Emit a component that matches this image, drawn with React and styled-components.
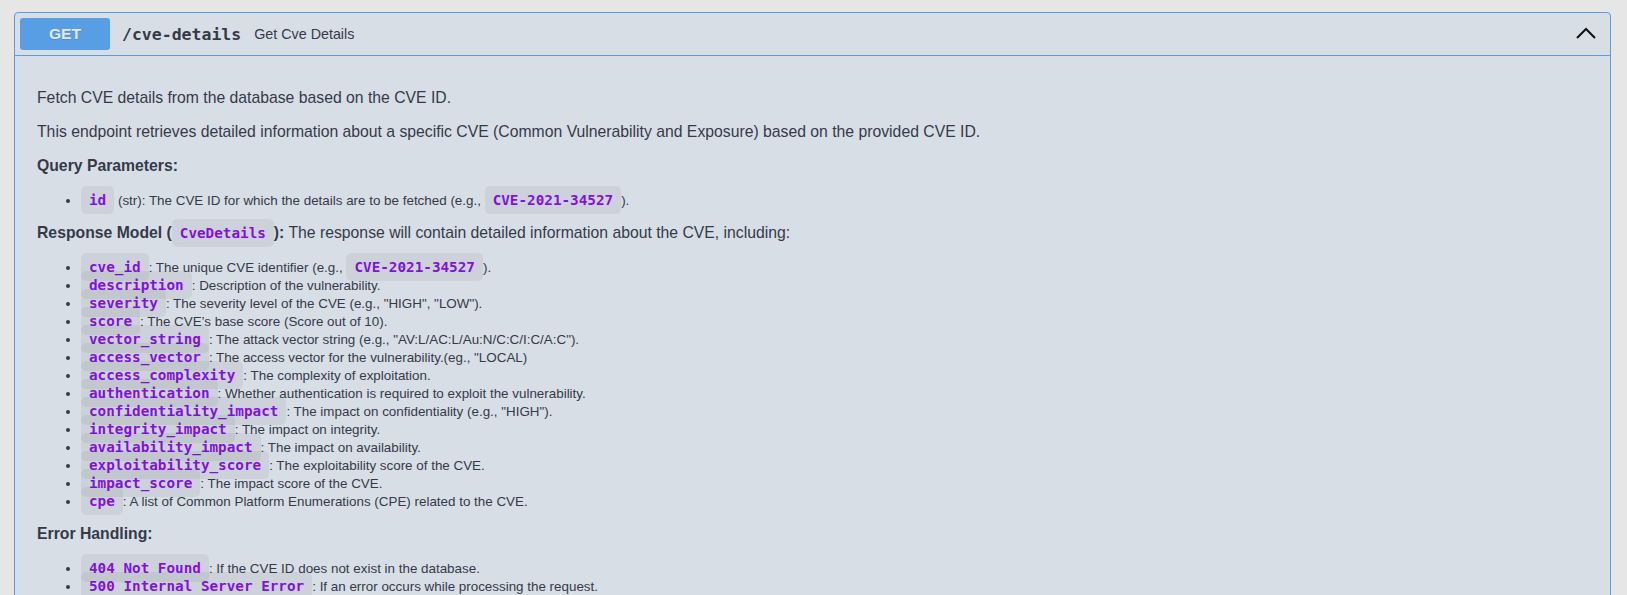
import React from 'react';
import styled, { createGlobalStyle } from 'styled-components';

const GlobalStyle = createGlobalStyle`
  body {
    margin: 0;
    background: #e6e6e6;
    font-family: 'Liberation Sans', Arial, sans-serif;
    color: #353a49;
  }
`;

const Page = styled.div`
  padding: 12px 16px 0 14px;
`;

const OpBlock = styled.div`
  border: 1px solid #579ee5;
  border-radius: 4px;
  background: #d8dee6;
`;

const Summary = styled.div`
  display: flex;
  align-items: center;
  padding: 5px;
  border-bottom: 1px solid #579ee5;
`;

const MethodBadge = styled.span`
  display: flex;
  align-items: center;
  justify-content: center;
  width: 90px;
  height: 32px;
  border-radius: 3px;
  background: #579ee5;
  color: #e6e6e6;
  font-size: 15.5px;
  font-weight: 700;
  text-shadow: 0 1px 0 rgba(0, 0, 0, 0.1);
`;

const PathText = styled.span`
  margin-left: 12px;
  font-family: 'DejaVu Sans Mono', monospace;
  font-size: 16.5px;
  font-weight: 700;
`;

const SummaryText = styled.span`
  margin-left: 13px;
  font-size: 14.3px;
`;

const Toggle = styled.button`
  margin-left: auto;
  margin-right: 9px;
  padding: 0;
  border: none;
  background: none;
  display: flex;
  cursor: pointer;
`;

const Body = styled.div`
  padding: 20px 22px 40px;
`;

const P = styled.p`
  margin: 10px 0;
  font-size: 15.75px;
  line-height: 24px;
`;

const List = styled.ul`
  margin: 13px 0 12px;
  padding-left: 44px;
  font-size: 13.4px;
  line-height: 18px;
`;

const Item = styled.li`
  height: 18px;
`;

const Code = styled.code`
  padding: 6px 8px;
  border-radius: 5px;
  background: rgba(0, 0, 0, 0.05);
  color: #8210e5;
  font-family: 'DejaVu Sans Mono', monospace;
  font-size: 14.3px;
  font-weight: 700;
  line-height: 18px;
`;

const fields = [
  ['cve_id', 'The unique CVE identifier (e.g., ', 'CVE-2021-34527', ').'],
  ['description', 'Description of the vulnerability.'],
  ['severity', 'The severity level of the CVE (e.g., "HIGH", "LOW").'],
  ['score', 'The CVE\u2019s base score (Score out of 10).'],
  ['vector_string', 'The attack vector string (e.g., "AV:L/AC:L/Au:N/C:C/I:C/A:C").'],
  ['access_vector', 'The access vector for the vulnerability.(eg., "LOCAL)'],
  ['access_complexity', 'The complexity of exploitation.'],
  ['authentication', 'Whether authentication is required to exploit the vulnerability.'],
  ['confidentiality_impact', 'The impact on confidentiality (e.g., "HIGH").'],
  ['integrity_impact', 'The impact on integrity.'],
  ['availability_impact', 'The impact on availability.'],
  ['exploitability_score', 'The exploitability score of the CVE.'],
  ['impact_score', 'The impact score of the CVE.'],
  ['cpe', 'A list of Common Platform Enumerations (CPE) related to the CVE.'],
];

const errors = [
  ['404 Not Found', 'If the CVE ID does not exist in the database.'],
  ['500 Internal Server Error', 'If an error occurs while processing the request.'],
];

const Chevron = () => (
  <svg width="20" height="20" viewBox="0 0 20 20">
    <polyline points="1,14 10,5 19,14" fill="none" stroke="#111" strokeWidth="2" />
  </svg>
);

export default function App() {
  return (
    <>
      <GlobalStyle />
      <Page>
        <OpBlock>
          <Summary>
            <MethodBadge>GET</MethodBadge>
            <PathText>/cve-details</PathText>
            <SummaryText>Get Cve Details</SummaryText>
            <Toggle aria-label="collapse">
              <Chevron />
            </Toggle>
          </Summary>
          <Body>
            <P>Fetch CVE details from the database based on the CVE ID.</P>
            <P>
              This endpoint retrieves detailed information about a specific CVE (Common
              Vulnerability and Exposure) based on the provided CVE ID.
            </P>
            <P>
              <strong>Query Parameters:</strong>
            </P>
            <List>
              <Item>
                <Code>id</Code> (str): The CVE ID for which the details are to be fetched (e.g.,{' '}
                <Code>CVE-2021-34527</Code>).
              </Item>
            </List>
            <P>
              <strong>
                Response Model (<Code>CveDetails</Code>):
              </strong>{' '}
              The response will contain detailed information about the CVE, including:
            </P>
            <List>
              {fields.map(([name, text, code, tail]) => (
                <Item key={name}>
                  <Code>{name}</Code>: {text}
                  {code && <Code>{code}</Code>}
                  {tail}
                </Item>
              ))}
            </List>
            <P>
              <strong>Error Handling:</strong>
            </P>
            <List>
              {errors.map(([name, text]) => (
                <Item key={name}>
                  <Code>{name}</Code>: {text}
                </Item>
              ))}
            </List>
          </Body>
        </OpBlock>
      </Page>
    </>
  );
}
